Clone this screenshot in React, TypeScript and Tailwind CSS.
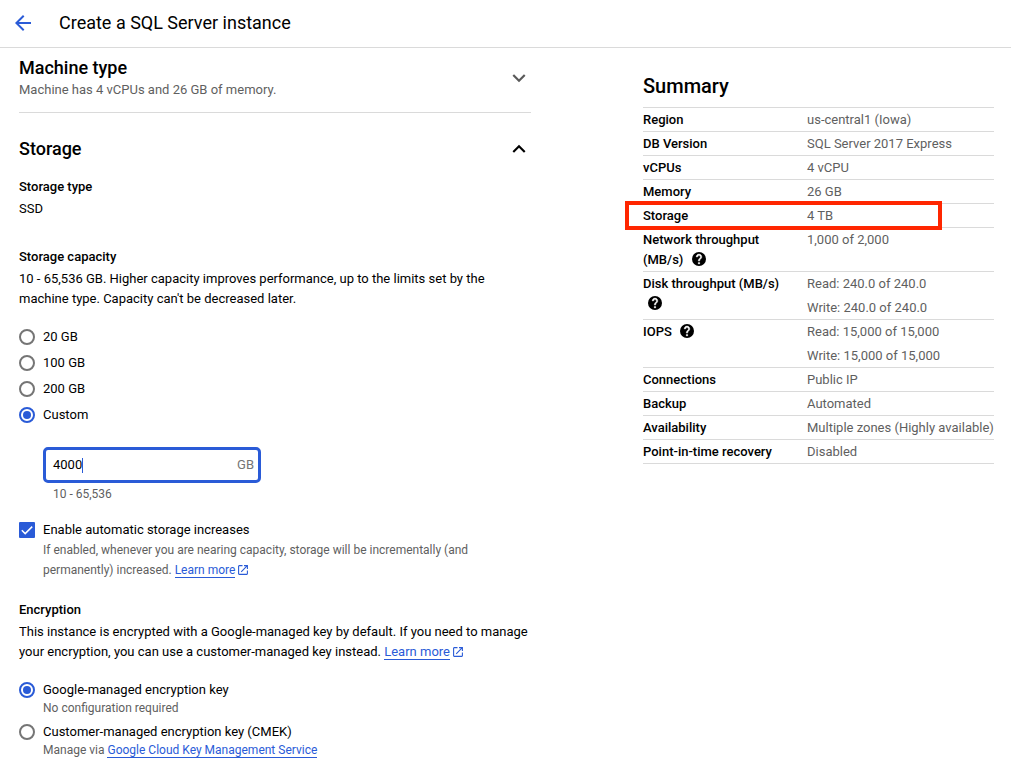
import React from "react";

function HelpIcon({ className = "" }: { className?: string }) {
  return (
    <svg viewBox="2 2 20 20" className={`inline-block h-3.5 w-3.5 ${className}`}>
      <circle cx="12" cy="12" r="10" fill="black" />
      <path
        d="M13 19h-2v-2h2v2zm2.070-7.750l-.9.920C13.450 12.900 13 13.500 13 15h-2v-.5c0-1.100.450-2.100 1.170-2.830l1.240-1.260c.370-.360.590-.860.590-1.410 0-1.100-.9-2-2-2s-2 .9-2 2H8c0-2.210 1.790-4 4-4s4 1.790 4 4c0 .880-.360 1.680-.930 2.250z"
        fill="white"
        stroke="white"
        strokeWidth="0.6"
      />
    </svg>
  );
}

function ExternalIcon() {
  return (
    <svg viewBox="0 0 10 10" className="ml-[3px] inline-block h-2.5 w-2.5 align-[-1px]" fill="none" stroke="#2a5bd7" strokeWidth="1.1">
      <path d="M4.500.6H1.200a.6.6 0 0 0-.6.6v7.600a.6.6 0 0 0 .6.6h7.600a.6.6 0 0 0 .6-.6V5.500M6 .6h3.400V4M9.300.7 3.200 6.800" />
    </svg>
  );
}

function Chevron({ up = false }: { up?: boolean }) {
  return (
    <svg viewBox="0 0 24 24" className={up ? "h-[26px] w-[26px] fill-black" : "h-[26px] w-[26px] fill-[#5a5a5a]"}>
      <path d={up ? "M12 8l-6 6 1.410 1.410L12 10.830l4.590 4.580L18 14z" : "M16.590 8.590L12 13.170 7.410 8.590 6 10l6 6 6-6z"} />
    </svg>
  );
}

function Radio({ checked = false }: { checked?: boolean }) {
  return checked ? (
    <span className="flex h-4 w-4 shrink-0 items-center justify-center rounded-full border-2 border-[#2a5bd7]">
      <span className="h-2 w-2 rounded-full bg-[#2a5bd7]" />
    </span>
  ) : (
    <span className="h-4 w-4 shrink-0 rounded-full border-2 border-[#757575]" />
  );
}

function Link({ children }: { children: React.ReactNode }) {
  return (
    <a href="#" className="border-b border-[#2a5bd7] text-[#2a5bd7]">
      {children}
    </a>
  );
}

const rows: { label: React.ReactNode; values: string[]; marked?: boolean }[] = [
  { label: "Region", values: ["us-central1 (Iowa)"] },
  { label: "DB Version", values: ["SQL Server 2017 Express"] },
  { label: "vCPUs", values: ["4 vCPU"] },
  { label: "Memory", values: ["26 GB"] },
  { label: "Storage", values: ["4 TB"], marked: true },
  {
    label: (
      <>
        Network throughput (MB/s) <HelpIcon className="ml-[5px] align-[-2px]" />
      </>
    ),
    values: ["1,000 of 2,000"],
  },
  {
    label: (
      <>
        Disk throughput (MB/s) <HelpIcon className="ml-[5px] align-[-2px]" />
      </>
    ),
    values: ["Read: 240.0 of 240.0", "Write: 240.0 of 240.0"],
  },
  {
    label: (
      <>
        IOPS <HelpIcon className="ml-[5px] align-[-2px]" />
      </>
    ),
    values: ["Read: 15,000 of 15,000", "Write: 15,000 of 15,000"],
  },
  { label: "Connections", values: ["Public IP"] },
  { label: "Backup", values: ["Automated"] },
  { label: "Availability", values: ["Multiple zones (Highly available)"] },
  { label: "Point-in-time recovery", values: ["Disabled"] },
];

export default function App() {
  return (
    <div className="h-[781px] w-[1011px] overflow-hidden bg-white font-['Roboto',sans-serif] text-[13px] leading-5 text-black">
      <header className="flex h-12 items-center border-b border-[#dadada] pb-px pl-[11px]">
        <svg viewBox="0 0 24 24" className="h-6 w-6 fill-[#2a5bd7]">
          <path d="M20 11H7.830l5.590-5.590L12 4l-8 8 8 8 1.410-1.410L7.830 13H20v-2z" />
        </svg>
        <h1 className="ml-6 text-lg leading-6">Create a SQL Server instance</h1>
      </header>

      <div className="flex items-start">
        <main className="ml-[19px] w-[512px]">
          <section className="flex h-[65px] items-start justify-between border-b border-[#dadada] pt-2">
            <div>
              <h2 className="text-lg leading-6 font-medium">Machine type</h2>
              <p className="text-[#5f5f5f]">Machine has 4 vCPUs and 26 GB of memory.</p>
            </div>
            <div className="mt-[9px] -mr-px">
              <Chevron />
            </div>
          </section>

          <div className="mt-6 flex h-6 items-center justify-between">
            <h2 className="text-lg leading-6 font-medium">Storage</h2>
            <div className="-mr-px">
              <Chevron up />
            </div>
          </div>

          <h3 className="mt-4 font-medium">Storage type</h3>
          <p className="mt-0.5">SSD</p>

          <h3 className="mt-7 font-medium">Storage capacity</h3>
          <p className="mt-0.5">
            10 - 65,536 GB. Higher capacity improves performance, up to the limits set by the
            <br />
            machine type. Capacity can't be decreased later.
          </p>

          <div className="mt-[15px]">
            {["20 GB", "100 GB", "200 GB", "Custom"].map((label) => (
              <label key={label} className="flex h-[26px] items-center gap-2">
                <Radio checked={label === "Custom"} />
                {label}
              </label>
            ))}
          </div>

          <div className="mt-[19px] ml-6 flex h-9 w-[218px] items-center justify-between rounded-[5px] border-3 border-[#2a5bd7] pr-1 pl-[7px]">
            <span className="flex items-center">
              4000
              <span className="h-[15px] w-px bg-[#2a5bd7]" />
            </span>
            <span className="text-[#757575]">GB</span>
          </div>
          <p className="mt-[3px] ml-[34px] text-xs leading-4 text-[#5f5f5f]">10 - 65,536</p>

          <div className="mt-[18px] flex gap-2">
            <span className="mt-0.5 flex h-4 w-4 shrink-0 items-center justify-center rounded-[1px] bg-[#2a5bd7]">
              <svg viewBox="0 0 16 16" className="h-4 w-4" fill="none" stroke="white" strokeWidth="1.5">
                <path d="M2.800 8.300 6.200 11.600 13.200 4.600" />
              </svg>
            </span>
            <div>
              <p>Enable automatic storage increases</p>
              <p className="text-xs leading-5 text-[#5f5f5f]">
                If enabled, whenever you are nearing capacity, storage will be incrementally (and
                <br />
                permanently) increased. <Link>Learn more</Link>
                <ExternalIcon />
              </p>
            </div>
          </div>

          <h3 className="mt-5 font-medium">Encryption</h3>
          <p className="mt-0.5 whitespace-nowrap">
            This instance is encrypted with a Google-managed key by default. If you need to manage
            <br />
            your encryption, you can use a customer-managed key instead. <Link>Learn more</Link>
            <ExternalIcon />
          </p>

          <div className="mt-[18px]">
            <label className="flex h-5 items-center gap-2">
              <Radio checked />
              Google-managed encryption key
            </label>
            <p className="ml-6 text-xs leading-4 text-[#5f5f5f]">No configuration required</p>
          </div>
          <div className="mt-1.5">
            <label className="flex h-5 items-center gap-2">
              <Radio />
              Customer-managed encryption key (CMEK)
            </label>
            <p className="ml-6 text-xs leading-4 text-[#5f5f5f]">
              Manage via <Link>Google Cloud Key Management Service</Link>
            </p>
          </div>
        </main>

        <aside className="mt-[26px] ml-28 w-[351px]">
          <h2 className="h-[34px] border-b border-[#dadada] text-xl leading-6 font-medium">Summary</h2>
          {rows.map((row, i) => (
            <div key={i} className="relative flex border-b border-[#dadada]">
              <div className="w-[164px] shrink-0 pt-0.5 pr-5 pb-px font-medium">{row.label}</div>
              <div className="text-[#5f5f5f]">
                {row.values.map((value) => (
                  <div key={value} className="h-6 pt-0.5 whitespace-nowrap last:h-[23px]">
                    {value}
                  </div>
                ))}
              </div>
              {row.marked && <div className="absolute -top-[3px] -left-[18px] h-[29px] w-[317px] border-4 border-[#ff2600]" />}
            </div>
          ))}
        </aside>
      </div>
    </div>
  );
}
